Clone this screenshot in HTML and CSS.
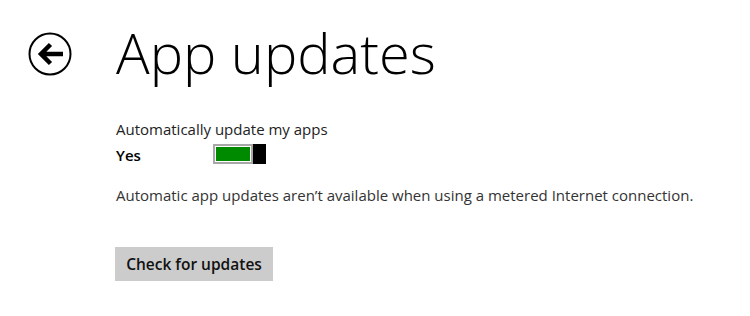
FILE: index.html
```html
<!DOCTYPE html>
<html>
<head>
<meta charset="utf-8">
<link rel="stylesheet" href="styles.css">
</head>
<body>
<div class="page">
  <header class="header">
    <button class="back" aria-label="Back">
      <svg width="44" height="44" viewBox="0 0 44 44">
        <circle cx="22" cy="22" r="20.5" fill="none" stroke="#000" stroke-width="2"/>
        <path d="M35 22 H13 M22.5 12.5 L13 22 L22.5 31.5" fill="none" stroke="#000" stroke-width="4.5" stroke-linejoin="miter"/>
      </svg>
    </button>
    <h1 class="title">App updates</h1>
  </header>
  <section class="content">
    <div class="setting">
      <div class="label">Automatically update my apps</div>
      <div class="toggle-row">
        <span class="state">Yes</span>
        <span class="toggle"><span class="track"><span class="fill"></span></span><span class="thumb"></span></span>
      </div>
    </div>
    <p class="note">Automatic app updates aren’t available when using a metered Internet connection.</p>
    <button class="check">Check for updates</button>
  </section>
</div>
</body>
</html>
```
FILE: styles.css
```css
html, body {
  margin: 0;
  padding: 0;
  background: #fff;
}
body {
  font-family: "Open Sans", "Noto Sans", sans-serif;
  color: #000;
  width: 750px;
  height: 316px;
  overflow: hidden;
}
.page {
  padding-top: 18px;
}
.header {
  display: flex;
  align-items: flex-start;
  height: 68px;
}
.back {
  margin: 14px 0 0 28px;
  padding: 0;
  border: 0;
  background: none;
  width: 44px;
  height: 44px;
  display: flex;
}
.title {
  margin: 0 0 0 44px;
  font-family: "Open Sans", sans-serif;
  font-weight: 300;
  font-size: 56px;
  line-height: 68px;
}
.content {
  padding-left: 116px;
  padding-top: 33px;
}
.label {
  font-size: 15px;
  line-height: 20px;
  color: #222;
}
.toggle-row {
  display: flex;
  align-items: flex-start;
  padding-top: 5px;
}
.state {
  font-weight: 600;
  font-size: 15px;
  line-height: 20px;
  margin-top: 1px;
  width: 97px;
}
.toggle {
  display: flex;
  height: 20px;
}
.track {
  width: 40px;
  height: 20px;
  border: 2px solid #a8a8a8;
  padding: 1px;
  box-sizing: border-box;
  display: flex;
  background: #fff;
}
.fill {
  flex: 1;
  background: #008a00;
}
.thumb {
  width: 13px;
  height: 20px;
  background: #000;
}
.note {
  margin: 20px 0 0 0;
  font-size: 15px;
  line-height: 20px;
  color: #333;
}
.check {
  display: block;
  margin: 42px 0 0 -1px;
  border: 0;
  background: #ccc;
  font-family: "Open Sans", sans-serif;
  font-weight: 600;
  font-size: 15.5px;
  color: #111;
  height: 34px;
  width: 158px;
  padding: 0;
}
```
